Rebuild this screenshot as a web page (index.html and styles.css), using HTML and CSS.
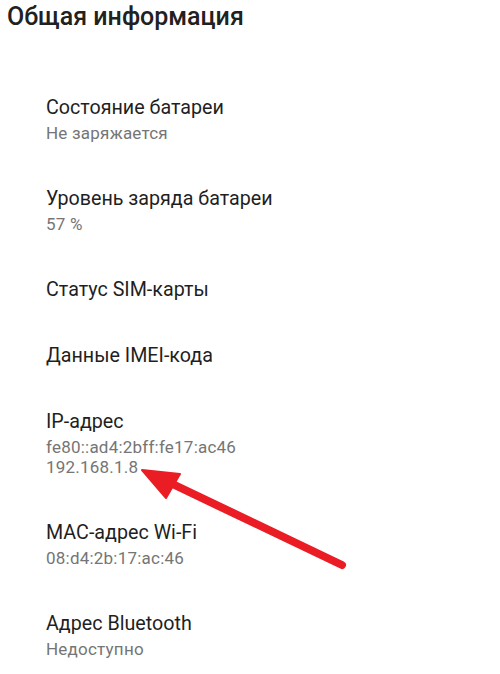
FILE: index.html
```html
<!DOCTYPE html>
<html lang="ru">
<head>
<meta charset="utf-8">
<link rel="stylesheet" href="styles.css">
</head>
<body>
<div class="screen">
  <h1 class="heading">Общая информация</h1>
  <ul class="list">
    <li class="item"><div class="title">Состояние батареи</div><div class="sub">Не заряжается</div></li>
    <li class="item"><div class="title">Уровень заряда батареи</div><div class="sub">57 %</div></li>
    <li class="item"><div class="title">Статус SIM-карты</div></li>
    <li class="item"><div class="title">Данные IMEI-кода</div></li>
    <li class="item"><div class="title">IP-адрес</div><div class="sub">fe80::ad4:2bff:fe17:ac46</div><div class="sub">192.168.1.8</div></li>
    <li class="item"><div class="title">MAC-адрес Wi-Fi</div><div class="sub">08:d4:2b:17:ac:46</div></li>
    <li class="item"><div class="title">Адрес Bluetooth</div><div class="sub">Недоступно</div></li>
  </ul>
  <svg class="arrow" width="500" height="674" viewBox="0 0 500 674">
    <line x1="342" y1="565" x2="160" y2="478" stroke="#ea1d25" stroke-width="8" stroke-linecap="round"/>
    <polygon points="142,470 180,474 166,498" fill="#ea1d25" stroke="#ea1d25" stroke-width="2" stroke-linejoin="round"/>
  </svg>
</div>
</body>
</html>
```

FILE: styles.css
```css
html, body {
  margin: 0;
  padding: 0;
  background: #ffffff;
}
.screen {
  position: relative;
  width: 500px;
  height: 674px;
  overflow: hidden;
  font-family: Roboto, "Noto Sans", sans-serif;
}
.heading {
  margin: 0;
  padding: 3px 0 0 7px;
  font-size: 25px;
  font-weight: 500;
  line-height: 28px;
  color: #212121;
}
.list {
  list-style: none;
  margin: 0;
  padding: 44px 0 0 0;
}
.item {
  padding: 20px 20px 20px 46px;
}
.title {
  font-size: 19.7px;
  line-height: 26px;
  color: #1f1f1f;
}
.sub {
  font-size: 17px;
  line-height: 20px;
  letter-spacing: 0.22px;
  color: #757575;
}
.title + .sub {
  margin-top: 2px;
}
.sub:last-child {
  padding-bottom: 3px;
}
.arrow {
  position: absolute;
  left: 0;
  top: 0;
  pointer-events: none;
}
```
